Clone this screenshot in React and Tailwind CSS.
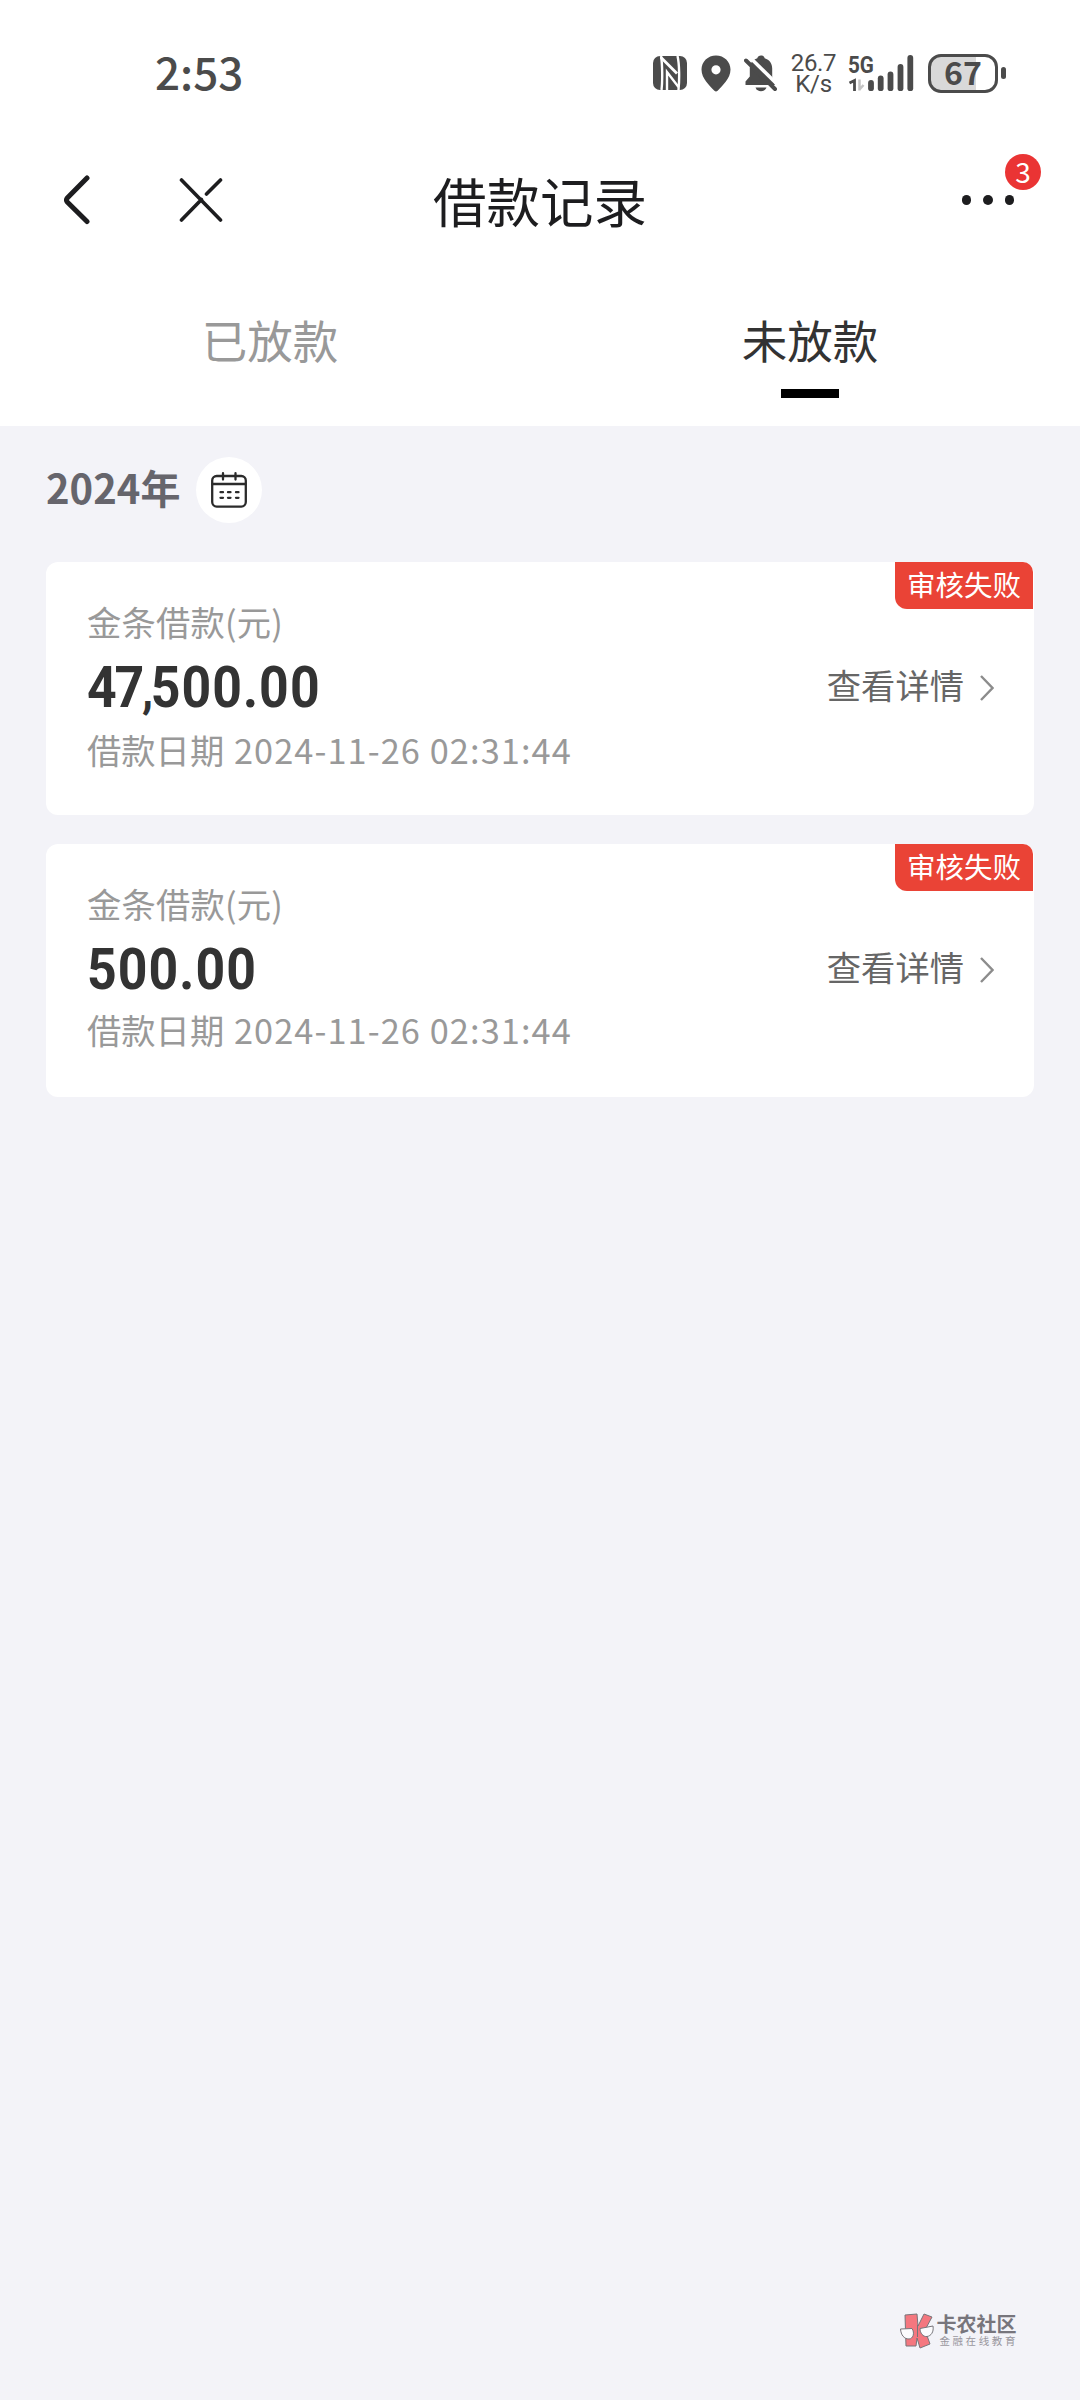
const TABS = [
  { key: "paid", label: "已放款" },
  { key: "unpaid", label: "未放款" },
];

const RECORDS = [
  { id: 1, amount: "47,500.00", date: "2024-11-26 02:31:44", status: "审核失败" },
  { id: 2, amount: "500.00", date: "2024-11-26 02:31:44", status: "审核失败" },
];

function NfcIcon() {
  return (
    <svg width="34" height="34" viewBox="0 0 34 34" className="shrink-0">
      <rect width="34" height="34" rx="7" fill="#4b4b4b" />
      <g fill="none" stroke="#fff" strokeWidth="2.400">
        <path d="M8 0C9.500 8 9.500 26 8.500 34" />
        <path d="M8 1.500L24 17.500" strokeWidth="2.800" />
        <path d="M24.500 0C26.500 8 26.500 24 25.500 34" />
        <path d="M14 34V16L25.500 31" />
      </g>
    </svg>
  );
}

function PinIcon() {
  return (
    <svg width="30" height="37" viewBox="0 0 30 37" className="ml-[14px] shrink-0">
      <path
        fillRule="evenodd"
        d="M15 0.500C6.800 0.500 0.500 6.800 0.500 14.500C0.500 23.500 8.500 30.500 13.400 35.800Q15 37.300 16.600 35.800C21.500 30.500 29.500 23.500 29.500 14.500C29.500 6.800 23.200 0.500 15 0.500ZM15 10.200a4.600 4.600 0 1 1 0 9.200a4.600 4.600 0 0 1 0-9.200Z"
        fill="#4b4b4b"
      />
    </svg>
  );
}

function MutedBellIcon() {
  return (
    <svg width="34" height="37" viewBox="0 0 34 37" className="ml-[13px] shrink-0">
      <path
        d="M17 0.500C15 0.500 13.800 1.500 13.300 3.200C8.500 4.700 5.800 8.500 5.800 13.500V21.500L1.500 26.500V30H31L29.500 26L28.200 21.500V13.500C28.200 8.500 25.500 4.700 20.700 3.200C20.200 1.500 19 0.500 17 0.500Z"
        fill="#4b4b4b"
      />
      <path d="M11.500 32.500h11c-1 2.500-3 3.800-5.500 3.800s-4.500-1.300-5.500-3.800Z" fill="#4b4b4b" />
      <path d="M4.500 1L36 32" stroke="#fff" strokeWidth="3.500" />
      <path d="M2 5.500L31 34" stroke="#4b4b4b" strokeWidth="4" strokeLinecap="round" />
    </svg>
  );
}

function SignalIcon() {
  return (
    <svg width="66" height="37" viewBox="0 0 66 37" className="absolute left-0 top-0">
      <path d="M1.500 28L6.500 25.500V36" fill="none" stroke="#4b4b4b" strokeWidth="2.800" />
      <path d="M11.500 24.500V35.500M11.500 34.500L15.500 30" fill="none" stroke="#c4c4c4" strokeWidth="2.500" />
      <g stroke="#4b4b4b" strokeWidth="5.800" strokeLinecap="round">
        <path d="M23 28V33.200" />
        <path d="M32.700 23.500V33.200" />
        <path d="M42.500 19.500V33.200" />
        <path d="M52.500 12V33.200" />
        <path d="M62.300 3V33.200" />
      </g>
    </svg>
  );
}

function StatusBar() {
  return (
    <div className="flex h-[130px] items-start justify-between pl-[155px] pr-[74px] text-[#4b4b4b]">
      <div className="mt-[39px] text-[44px] leading-[65px] font-medium">2:53</div>
      <div className="mt-[53px] flex h-10 items-center">
        <NfcIcon />
        <PinIcon />
        <MutedBellIcon />
        <div className="ml-[12px] flex w-[47px] flex-col items-center pt-[2px] font-[Roboto,sans-serif] text-[24px] leading-[21.500px] tracking-[-0.300px]">
          <span>26.7</span>
          <span>K/s</span>
        </div>
        <div className="relative ml-[11px] h-[37px] w-[66px]">
          <SignalIcon />
          <span className="block w-6 origin-left scale-x-[0.860] font-[Roboto,sans-serif] text-[24px] leading-[20px] font-bold">5G</span>
        </div>
        <div className="ml-[14px] flex items-center gap-[3px]">
          <div className="flex h-[39px] w-[70px] items-center justify-center rounded-[13px] border-[3px] border-[#4b4b4b] bg-linear-to-r from-[#d9d9d9] from-70% to-white to-70% pb-[4px] text-[32px] leading-none font-bold">
            67
          </div>
          <div className="h-3 w-[5px] rounded-full bg-[#4b4b4b]" />
        </div>
      </div>
    </div>
  );
}

function NavBar() {
  return (
    <div className="grid h-[140px] grid-cols-3 items-center text-[#1d1d1f]">
      <div className="flex items-center pl-[63px]">
        <svg width="28" height="50" viewBox="0 0 28 50" fill="none" stroke="currentColor" strokeWidth="5" strokeLinecap="round" strokeLinejoin="round">
          <path d="M24 3L4.500 22.800Q2.500 25 4.500 27.200L24 46.500" />
        </svg>
        <svg width="44" height="44" viewBox="0 0 44 44" className="ml-[88px]" fill="none" stroke="currentColor" strokeWidth="3.600" strokeLinecap="round">
          <path d="M2.500 2L41.500 42M41.500 2L27.500 16M22.500 21.500L2.500 42" />
        </svg>
      </div>
      <h1 className="text-center text-[53.500px] leading-[76px]">借款记录</h1>
      <div className="flex justify-end pr-[66px]">
        <div className="relative flex h-10 items-center gap-3">
          <i className="size-[9.500px] rounded-full bg-current" />
          <i className="size-[9.500px] rounded-full bg-current" />
          <i className="size-[9.500px] rounded-full bg-current" />
          <span className="absolute -top-[26px] -right-[27px] flex size-[36px] items-center justify-center rounded-full bg-[#ea3434] pb-[2px] text-[28px] leading-none text-white">
            3
          </span>
        </div>
      </div>
    </div>
  );
}

function Tabs({ active }) {
  return (
    <div className="grid h-[156px] grid-cols-2">
      {TABS.map((tab) => (
        <div key={tab.key} className="flex flex-col items-center pt-[36px]">
          <span
            className={
              tab.key === active
                ? "text-[45.500px] leading-[66px] text-[#333]"
                : "text-[45.500px] leading-[66px] text-[#999]"
            }
          >
            {tab.label}
          </span>
          {tab.key === active && <div className="mt-[17px] h-[9px] w-[58px] bg-black" />}
        </div>
      ))}
    </div>
  );
}

function CalendarIcon() {
  return (
    <svg width="36" height="36" viewBox="0 0 36 36" fill="none" stroke="#2b2b2b" strokeWidth="2.300" strokeLinecap="round">
      <rect x="1.200" y="4" width="33.600" height="30.600" rx="4.500" />
      <path d="M1.500 12H34.500M12 1.200V7.500M24.500 1.200V7.500" />
      <path d="M9.500 20.200h2.500M17 20.200h2.500M25 20.200h2.500M9.500 25.800h2.500M17 25.800h2.500M25 25.800h2.500" />
    </svg>
  );
}

function Amount({ value }) {
  const [head, tail] = value.includes(",") ? value.split(",") : ["", value];
  return (
    <p className="origin-left scale-x-[0.900] font-[Roboto,sans-serif] text-[57.500px] leading-[72px] font-bold text-[#333]">
      {head && (
        <span className="tracking-[-2.500px]">
          {head}
          <span className="text-[50px]">,</span>
        </span>
      )}
      <span className="tracking-[1.200px]">{tail}</span>
    </p>
  );
}

function RecordCard({ record }) {
  return (
    <div className="relative flex h-[253px] items-start justify-between rounded-[12px] bg-white pl-[41px] pr-[40px]">
      <div className="pt-[34px] text-[34.300px] leading-[50px] text-[#999]">
        <p className="tracking-[0.200px]">金条借款(元)</p>
        <div className="mt-[6px] -mb-[2px]">
          <Amount value={record.amount} />
        </div>
        <p>
          借款日期 <span className="ml-[2px] tracking-[1.100px]">{record.date}</span>
        </p>
      </div>
      <div className="mt-[97px] flex items-center text-[34.300px] leading-[50px] text-[#666]">
        <span>查看详情</span>
        <svg width="14" height="26" viewBox="0 0 14 26" className="mt-[7px] ml-[16px]" fill="none" stroke="#8c8c8c" strokeWidth="2.400">
          <path d="M1 1L12.500 13L1 25" />
        </svg>
      </div>
      <span className="absolute top-0 right-[1px] flex h-[47px] w-[138px] items-center justify-center rounded-tr-[10px] rounded-bl-[12px] bg-[#ea4336] pb-[3px] text-[28.500px] leading-none text-white">
        {record.status}
      </span>
    </div>
  );
}

function Watermark() {
  return (
    <div className="mt-auto mr-[62px] mb-[51px] flex items-center gap-[2px] self-end">
      <svg width="34" height="36" viewBox="0 0 34 36">
        <path d="M5 2L17 1L18 13L24 1L32 4L25 17L30 31L20 35L17 25L16 33L6 33Z" fill="#f4777f" stroke="#77757a" strokeWidth="1" />
        <path d="M17.500 12V24" stroke="#77757a" strokeWidth="1" />
        <g fill="#fbfbfd" stroke="#77757a" strokeWidth="1">
          <path d="M0.500 16L12 15.500C15 20 13 26 9 26C4 26 1 22 0.500 16Z" />
          <path d="M20 15.500L33 13C34 19 31 23 27 23.500C23 24 20 20 20 15.500Z" />
        </g>
      </svg>
      <div className="flex flex-col text-[#77757c]">
        <span className="text-[20px] leading-[20px] font-bold">卡农社区</span>
        <span className="pl-[3px] text-[10.500px] leading-[14px] tracking-[2.600px] text-[#99979e]">金融在线教育</span>
      </div>
    </div>
  );
}

export default function App() {
  return (
    <div className="flex h-[2400px] w-[1080px] flex-col overflow-hidden bg-[#f3f3f8] font-['Noto_Sans_CJK_SC',sans-serif]">
      <header className="bg-white">
        <StatusBar />
        <NavBar />
        <Tabs active="unpaid" />
      </header>

      <main className="flex flex-1 flex-col">
        <div className="flex h-[136px] items-center gap-4 pl-[46px] pb-[8px]">
          <span className="pb-[6px] text-[40px] leading-[58px] font-bold text-[#66656c]">2024年</span>
          <div className="flex size-[66px] items-center justify-center rounded-full bg-white">
            <CalendarIcon />
          </div>
        </div>

        <div className="flex flex-col gap-[29px] px-[46px]">
          {RECORDS.map((record) => (
            <RecordCard key={record.id} record={record} />
          ))}
        </div>

        <Watermark />
      </main>
    </div>
  );
}
